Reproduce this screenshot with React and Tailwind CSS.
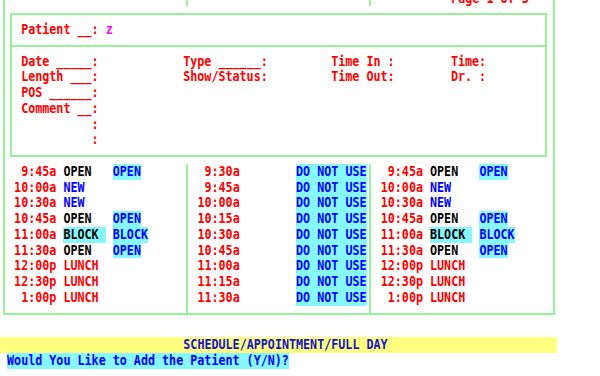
import React from 'react';

// terminal grid: 7.05px per column, 15.75px per row
const line = 'border-[#98f298]';
const font = { fontFamily: '"DejaVu Sans Mono", "Liberation Mono", monospace' };

const tone = {
  r: 'text-[#ff0000]',
  b: 'text-[#0000ff]',
  k: 'text-black',
  bc: 'text-[#0000ff] bg-[#88f8ff]',
  kc: 'text-black bg-[#88f8ff]',
};

const sideRows = [
  ['9:45a', ['OPEN', 'k'], ['OPEN', 'bc']],
  ['10:00a', ['NEW', 'b']],
  ['10:30a', ['NEW', 'b']],
  ['10:45a', ['OPEN', 'k'], ['OPEN', 'bc']],
  ['11:00a', ['BLOCK ', 'kc'], ['BLOCK', 'bc']],
  ['11:30a', ['OPEN', 'k'], ['OPEN', 'bc']],
  ['12:00p', ['LUNCH', 'r']],
  ['12:30p', ['LUNCH', 'r']],
  ['1:00p', ['LUNCH', 'r']],
];

const midRows = ['9:30a', '9:45a', '10:00a', '10:15a', '10:30a', '10:45a', '11:00a', '11:15a', '11:30a'];

// terminal glyphs are taller than the mono font, stretch them a bit
const T = ({ children, className = '' }) => (
  <span className={`inline-block whitespace-pre scale-y-[1.15] translate-y-[1px] ${className}`}>{children}</span>
);

const Chunk = ({ text, t }) => (
  <span className={`inline-block h-[15.75px] ${tone[t]}`}>
    <T>{text}</T>
  </span>
);

const SideColumn = () => (
  <div className="pl-[2.55px] pb-[6.875px]">
    {sideRows.map(([time, status, second], i) => (
      <div key={i} className="flex h-[15.75px]">
        <span className="w-[49.35px] text-right text-[#ff0000]">
          <T>{time}</T>
        </span>
        <span className="w-[7.05px]" />
        <span className="w-[49.35px] flex">{status && <Chunk text={status[0]} t={status[1]} />}</span>
        {second && <Chunk text={second[0]} t={second[1]} />}
      </div>
    ))}
  </div>
);

const MidColumn = () => (
  <div className="pl-[2.55px] pb-[6.875px]">
    {midRows.map((time, i) => (
      <div key={i} className="flex h-[15.75px]">
        <span className="w-[49.35px] text-right text-[#ff0000]">
          <T>{time}</T>
        </span>
        <span className="w-[56.4px]" />
        <Chunk text="DO NOT USE" t="bc" />
      </div>
    ))}
  </div>
);

const Field = ({ children }) => (
  <div className="h-[15.75px]">
    <T>{children}</T>
  </div>
);

export default function App() {
  return (
    <div
      className="w-[600px] h-[376px] overflow-hidden bg-white font-bold text-[11.71px] leading-[15.75px]"
      style={font}
    >
      <div className="mt-[-9.375px]">
        {/* outer box, top edge is above the screen */}
        <div className={`ml-[2.5px] w-[552px] border-x-2 border-b-2 ${line}`}>
          {/* row -1: tail of the previous line */}
          <div className="flex h-[15.75px]">
            <div className="w-[181.3px]" />
            <div className={`w-[183.3px] border-l-2 ${line}`} />
            <div className={`flex-1 border-l-2 ${line} pl-[80.1px] text-[#ff0000]`}>
              <T>Page 1 of 3</T>
            </div>
          </div>

          {/* inner patient box */}
          <div className={`mt-[6.875px] mb-[6.875px] ml-[5.05px] w-[537.8px] border-2 ${line}`}>
            <div className={`border-b-2 ${line} py-[6.875px] pl-[9.6px]`}>
              <Field>
                <span className="text-[#ff0000]">Patient __: </span>
                <span className="text-[#ff00ff]">z</span>
              </Field>
            </div>
            <div className="py-[6.875px] pl-[9.6px] text-[#ff0000]">
              <Field>{'Date _____:            Type ______:         Time In :        Time:'}</Field>
              <Field>{'Length ___:            Show/Status:         Time Out:        Dr. :'}</Field>
              <Field>{'POS ______:'}</Field>
              <Field>{'Comment __:'}</Field>
              <Field>{'          :'}</Field>
              <Field>{'          :'}</Field>
            </div>
          </div>

          {/* schedule columns */}
          <div className="flex">
            <div className="w-[181.3px]">
              <SideColumn />
            </div>
            <div className={`w-[183.3px] border-l-2 ${line}`}>
              <MidColumn />
            </div>
            <div className={`flex-1 border-l-2 ${line}`}>
              <SideColumn />
            </div>
          </div>
        </div>

        <div className="mt-[22.625px] w-[556.95px] h-[15.75px] bg-[#ffff80] pl-[183.3px] text-[#1414c8]">
          <T>SCHEDULE/APPOINTMENT/FULL DAY</T>
        </div>
        <div className="ml-[7.05px] w-[282px] h-[15.75px] bg-[#88f8ff] text-[#0000ff]">
          <T>Would You Like to Add the Patient (Y/N)?</T>
        </div>
      </div>
    </div>
  );
}
